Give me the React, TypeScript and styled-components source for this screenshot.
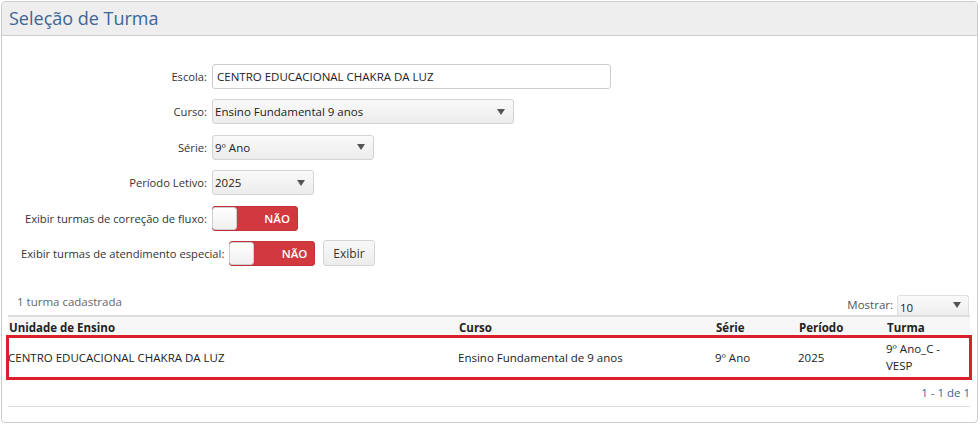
import styled, { createGlobalStyle } from 'styled-components'

const GlobalStyle = createGlobalStyle`
  html, body {
    margin: 0;
    padding: 0;
    background: #ffffff;
  }
  body {
    font-family: 'Open Sans', 'Noto Sans', sans-serif;
    font-size: 11.5px;
    color: #333333;
  }
`

const rows = [
  {
    unidade: 'CENTRO EDUCACIONAL CHAKRA DA LUZ',
    curso: 'Ensino Fundamental de 9 anos',
    serie: '9º Ano',
    periodo: '2025',
    turma: '9º Ano_C - VESP',
  },
]

const Toggle = ({ label }: { label: string }) => (
  <Switch>
    <Knob />
    <SwitchText>{label}</SwitchText>
  </Switch>
)

const App = () => {
  return (
    <>
      <GlobalStyle />
      <Panel>
        <Header>
          <Title>Seleção de Turma</Title>
        </Header>
        <Body>
          <Form>
            <Row>
              <Label>Escola:</Label>
              <TextInput defaultValue="CENTRO EDUCACIONAL CHAKRA DA LUZ" />
            </Row>
            <Row>
              <Label>Curso:</Label>
              <Select width={302}>
                <span>Ensino Fundamental 9 anos</span>
                <Caret />
              </Select>
            </Row>
            <Row>
              <Label>Série:</Label>
              <Select width={162}>
                <span>9º Ano</span>
                <Caret />
              </Select>
            </Row>
            <Row>
              <Label>Período Letivo:</Label>
              <Select width={102}>
                <span>2025</span>
                <Caret />
              </Select>
            </Row>
            <Row>
              <Label>Exibir turmas de correção de fluxo:</Label>
              <Toggle label="NÃO" />
            </Row>
            <Row>
              <Label>Exibir turmas de atendimento especial:</Label>
              <Toggle label="NÃO" />
              <Button>Exibir</Button>
            </Row>
          </Form>

          <TableTop>
            <Count>1 turma cadastrada</Count>
            <Show>
              Mostrar:
              <SmallSelect>
                <span>10</span>
                <Caret />
              </SmallSelect>
            </Show>
          </TableTop>

          <Table>
            <colgroup>
              <col style={{ width: 450 }} />
              <col style={{ width: 257 }} />
              <col style={{ width: 83 }} />
              <col style={{ width: 88 }} />
              <col />
            </colgroup>
            <thead>
              <tr>
                <Th>Unidade de Ensino</Th>
                <Th>Curso</Th>
                <Th>Série</Th>
                <Th>Período</Th>
                <Th>Turma</Th>
              </tr>
            </thead>
            <tbody>
              {rows.map((r, i) => (
                <DataRow key={i} selected>
                  <Td>{r.unidade}</Td>
                  <Td>{r.curso}</Td>
                  <Td>{r.serie}</Td>
                  <Td>{r.periodo}</Td>
                  <Td>{r.turma}</Td>
                </DataRow>
              ))}
            </tbody>
          </Table>

          <Pager>1 - 1 de 1</Pager>
          <Footer />
        </Body>
      </Panel>
    </>
  )
}

export default App

const Panel = styled.div`
  margin: 1px 2px 0 1px;
  height: 422px;
  box-sizing: border-box;
  border: 1px solid #cccccc;
  border-radius: 4px;
  background: #ffffff;
  overflow: hidden;
`

const Header = styled.div`
  height: 34px;
  box-sizing: border-box;
  background: #eeeeee;
  border-bottom: 1px solid #cccccc;
  padding: 3px 7px 0;
`

const Title = styled.h1`
  margin: 0;
  font-family: 'Open Sans', 'Noto Sans', sans-serif;
  font-weight: 400;
  font-size: 18px;
  line-height: 26px;
  color: #3d6592;
`

const Body = styled.div`
  padding: 28px 7px 0 6px;
`

const Form = styled.div`
  display: flex;
  flex-direction: column;
  gap: 10.4px;
  padding-left: 13px;
`

const Row = styled.div`
  display: flex;
  align-items: center;
  gap: 5px;
  height: 25px;
`

const Label = styled.label`
  min-width: 186px;
  text-align: right;
  white-space: nowrap;
  font-size: 11.2px;
  color: #333333;
`

const TextInput = styled.input`
  width: 399px;
  height: 25px;
  box-sizing: border-box;
  border: 1px solid #cccccc;
  border-radius: 3px;
  padding: 0 4px;
  font-family: inherit;
  font-size: 11.5px;
  color: #222222;
  outline: none;
`

const Select = styled.div<{ width: number }>`
  width: ${(p) => p.width}px;
  height: 25px;
  box-sizing: border-box;
  display: flex;
  align-items: center;
  justify-content: space-between;
  padding: 0 8px 0 2px;
  border: 1px solid #d3d3d3;
  border-radius: 3px;
  background: linear-gradient(#fafafa, #ececec);
  color: #222222;
`

const Caret = styled.i`
  width: 0;
  height: 0;
  border-left: 4px solid transparent;
  border-right: 4px solid transparent;
  border-top: 6px solid #555555;
`

const Switch = styled.div`
  width: 86px;
  height: 25px;
  box-sizing: border-box;
  display: flex;
  align-items: center;
  background: #d1393f;
  border: 1px solid #c23238;
  border-radius: 3px;
`

const Knob = styled.span`
  width: 25px;
  height: 23px;
  box-sizing: border-box;
  margin-left: -1px;
  background: linear-gradient(#ffffff, #f0f0f0);
  border: 1px solid #cfcfcf;
  border-radius: 3px;
`

const SwitchText = styled.span`
  flex: 1;
  text-align: right;
  padding-right: 7px;
  color: #ffffff;
  font-weight: 600;
`

const Button = styled.button`
  margin-left: 3px;
  height: 26px;
  padding: 0 9px;
  border: 1px solid #d4d4d4;
  border-radius: 3px;
  background: linear-gradient(#f8f8f8, #ececec);
  font-family: inherit;
  font-size: 12px;
  color: #333333;
`

const TableTop = styled.div`
  margin-top: 28px;
  display: flex;
  justify-content: space-between;
  align-items: flex-end;
  border-bottom: 2px solid #dddddd;
  padding: 0 1px 0 9px;
  height: 21px;
`

const Count = styled.span`
  color: #666666;
  padding-bottom: 6px;
`

const Show = styled.div`
  display: flex;
  align-items: center;
  gap: 4px;
  color: #555555;
`

const SmallSelect = styled.div`
  width: 72px;
  height: 20px;
  box-sizing: border-box;
  display: flex;
  align-items: flex-end;
  justify-content: space-between;
  padding: 0 7px 0 2px;
  border: 1px solid #e0e0e0;
  border-bottom: none;
  border-radius: 3px 3px 0 0;
  background: linear-gradient(#fafafa, #eeeeee);
  color: #222222;

  i {
    align-self: center;
  }
`

const Table = styled.table`
  width: 100%;
  table-layout: fixed;
  border-collapse: collapse;
`

const Th = styled.th`
  text-align: left;
  font-weight: 700;
  padding: 1px 1px 0;
  height: 19px;
  background: #f7f7f7;
  color: #222222;
`

const DataRow = styled.tr<{ selected?: boolean }>`
  outline: ${(p) => (p.selected ? '3px solid #d9202b' : 'none')};
  outline-offset: -1px;
`

const Td = styled.td`
  padding: 2px 12px 2px 0;
  height: 41px;
  box-sizing: border-box;
  color: #222222;
  line-height: 17px;
`

const Pager = styled.div`
  text-align: right;
  padding: 7px 0 0;
  color: #3d6592;
`

const Footer = styled.div`
  margin-top: 6px;
  border-bottom: 1px solid #dddddd;
`
